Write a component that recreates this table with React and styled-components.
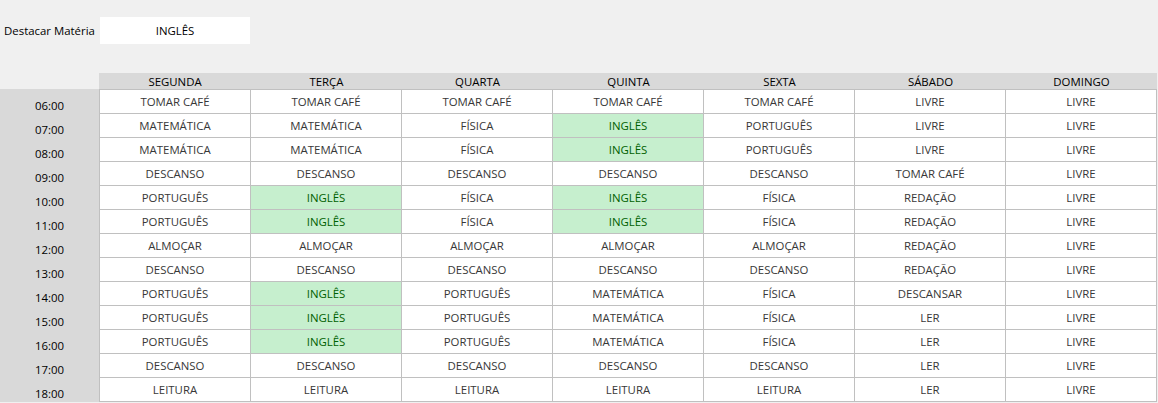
import React from 'react';
import styled, { createGlobalStyle } from 'styled-components';

const GlobalStyle = createGlobalStyle`
    body {
        margin: 0;
        background: #f0f0f0;
        font-family: "Open Sans", "Liberation Sans", sans-serif;
    }
`;

const DAYS = ['SEGUNDA', 'TERÇA', 'QUARTA', 'QUINTA', 'SEXTA', 'SÁBADO', 'DOMINGO'];

const TIMES = ['06:00', '07:00', '08:00', '09:00', '10:00', '11:00', '12:00', '13:00', '14:00', '15:00', '16:00', '17:00', '18:00'];

const SCHEDULE = [
    ['TOMAR CAFÉ', 'MATEMÁTICA', 'MATEMÁTICA', 'DESCANSO', 'PORTUGUÊS', 'PORTUGUÊS', 'ALMOÇAR', 'DESCANSO', 'PORTUGUÊS', 'PORTUGUÊS', 'PORTUGUÊS', 'DESCANSO', 'LEITURA'],
    ['TOMAR CAFÉ', 'MATEMÁTICA', 'MATEMÁTICA', 'DESCANSO', 'INGLÊS', 'INGLÊS', 'ALMOÇAR', 'DESCANSO', 'INGLÊS', 'INGLÊS', 'INGLÊS', 'DESCANSO', 'LEITURA'],
    ['TOMAR CAFÉ', 'FÍSICA', 'FÍSICA', 'DESCANSO', 'FÍSICA', 'FÍSICA', 'ALMOÇAR', 'DESCANSO', 'PORTUGUÊS', 'PORTUGUÊS', 'PORTUGUÊS', 'DESCANSO', 'LEITURA'],
    ['TOMAR CAFÉ', 'INGLÊS', 'INGLÊS', 'DESCANSO', 'INGLÊS', 'INGLÊS', 'ALMOÇAR', 'DESCANSO', 'MATEMÁTICA', 'MATEMÁTICA', 'MATEMÁTICA', 'DESCANSO', 'LEITURA'],
    ['TOMAR CAFÉ', 'PORTUGUÊS', 'PORTUGUÊS', 'DESCANSO', 'FÍSICA', 'FÍSICA', 'ALMOÇAR', 'DESCANSO', 'FÍSICA', 'FÍSICA', 'FÍSICA', 'DESCANSO', 'LEITURA'],
    ['LIVRE', 'LIVRE', 'LIVRE', 'TOMAR CAFÉ', 'REDAÇÃO', 'REDAÇÃO', 'REDAÇÃO', 'REDAÇÃO', 'DESCANSAR', 'LER', 'LER', 'LER', 'LER'],
    Array(13).fill('LIVRE'),
];

const App = () => {
    const highlight = 'INGLÊS';

    return (
        <Page>
            <GlobalStyle />
            <TopBar>
                <Label>Destacar Matéria</Label>
                <HighlightBox>{highlight}</HighlightBox>
            </TopBar>

            <Schedule>
                <Corner />
                {DAYS.map(day => (
                    <DayHeader key={day}>{day}</DayHeader>
                ))}

                {TIMES.map((time, row) => (
                    <React.Fragment key={time}>
                        <TimeCell>{time}</TimeCell>
                        {SCHEDULE.map((col, c) => (
                            <SlotCell
                                key={c}
                                $firstCol={c === 0}
                                $firstRow={row === 0}
                                $highlight={col[row] === highlight}
                            >
                                {col[row]}
                            </SlotCell>
                        ))}
                    </React.Fragment>
                ))}
            </Schedule>
        </Page>
    );
};

export default App;

const Page = styled.div`
    padding-top: 17px;
    font-size: 11.4px;
    color: #383838;
`;

const TopBar = styled.div`
    display: grid;
    grid-template-columns: 99px 151px;
    align-items: center;
    height: 27px;
`;

const Label = styled.div`
    color: #000;
    text-align: center;
    white-space: nowrap;
`;

const HighlightBox = styled.div`
    margin-left: 1px;
    height: 27px;
    background: #ffffff;
    color: #000;
    display: flex;
    align-items: center;
    justify-content: center;
`;

const Schedule = styled.div`
    display: grid;
    grid-template-columns: 99px 152px repeat(6, 151px);
    margin-top: 29px;
`;

const Corner = styled.div``;

const DayHeader = styled.div`
    height: 16px;
    background: #d9d9d9;
    color: #000;
    display: flex;
    align-items: center;
    justify-content: center;
`;

const TimeCell = styled.div`
    background: #d9d9d9;
    color: #000;
    display: flex;
    align-items: flex-end;
    justify-content: center;
    padding-bottom: 1px;
    line-height: 14px;
`;

const SlotCell = styled.div`
    height: 23px;
    display: flex;
    align-items: center;
    justify-content: center;
    background: ${props => props.$highlight ? '#c6efce' : '#ffffff'};
    color: ${props => props.$highlight ? '#006100' : '#383838'};
    border-right: 1px solid #c0c0c0;
    border-bottom: 1px solid #c0c0c0;
    border-left: ${props => props.$firstCol ? '1px solid #c0c0c0' : 'none'};
    border-top: ${props => props.$firstRow ? '1px solid #c0c0c0' : 'none'};
`;
